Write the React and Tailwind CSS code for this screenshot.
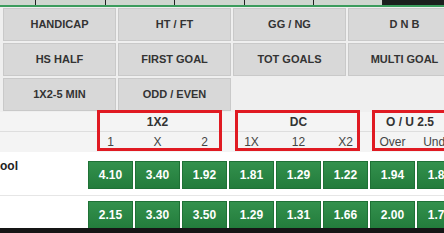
const MARKETS = [
  ["HANDICAP", "HT / FT", "GG / NG", "D N B"],
  ["HS HALF", "FIRST GOAL", "TOT GOALS", "MULTI GOAL"],
  ["1X2-5 MIN", "ODD / EVEN"],
];

const GROUPS = [
  { title: "1X2", cols: ["1", "X", "2"], w: "w-[139px]" },
  { title: "DC", cols: ["1X", "12", "X2"], w: "w-[139px]" },
  { title: "O / U 2.5", cols: ["Over", "Under"], w: "w-[80px]" },
];

const MATCHES = [
  { name: "ool", odds: [["4.10", "3.40", "1.92"], ["1.81", "1.29", "1.22"], ["1.94", "1.86"]] },
  { name: "", odds: [["2.15", "3.30", "3.50"], ["1.29", "1.31", "1.66"], ["2.00", "1.76"]] },
];

const TABS = [36, 70, 69, 70, 69, 69];

const OddButton = ({ value }) => (
  <button className="w-[45px] h-[28px] shrink-0 bg-gradient-to-b from-[#33914d] to-[#237c3c] border border-[#1f7136] text-white text-[12px] font-bold">
    {value}
  </button>
);

export default function App() {
  return (
    <div
      className="w-[444px] h-[233px] overflow-hidden bg-white relative"
      style={{ fontFamily: '"Liberation Sans", Arial, sans-serif' }}
    >
      {/* top tab strip */}
      <div className="flex h-[7px] border-b-2 border-[#3b9c5c]">
        {TABS.map((w, i) => (
          <div key={i} style={{ width: w }} className="shrink-0 bg-[#cfd6cf] border-r border-[#222]" />
        ))}
        <div className="flex-1 bg-[#1b1f1d]" />
      </div>

      {/* market buttons */}
      <div className="bg-[#efefef] pl-[3px] pt-[1px] pb-[1px] flex flex-col gap-[2px]">
        {MARKETS.map((row, r) => (
          <div key={r} className="flex gap-[2px]">
            {row.map((label) => (
              <button
                key={label}
                className="w-[113px] h-[33px] shrink-0 bg-[#d8d8d8] border border-[#c9c9c9] text-[#333] text-[11px] font-bold uppercase"
              >
                {label}
              </button>
            ))}
          </div>
        ))}
      </div>

      {/* header */}
      <div className="relative bg-[#f4f4f4] text-[11px] text-[#444]">
        <div className="flex h-[20px] items-center border-b border-[#dedede] pl-[88px] gap-[2px]">
          {GROUPS.map((g) => (
            <div key={g.title} className={`${g.w} shrink-0 text-center text-[12px] font-bold text-[#333]`}>
              {g.title}
            </div>
          ))}
        </div>
        <div className="flex h-[20px] items-center pl-[88px] gap-[2px] text-[12px]">
          {GROUPS.map((g) => (
            <div key={g.title} className="flex gap-[2px] shrink-0">
              {g.cols.map((c) => (
                <div key={c} className="w-[45px] text-center">
                  {c}
                </div>
              ))}
            </div>
          ))}
        </div>
        {/* highlight boxes */}
        <div className="absolute left-[97px] top-[-2px] w-[125px] h-[41px] border-[3px] border-[#e01a22]" />
        <div className="absolute left-[235px] top-[-2px] w-[125px] h-[41px] border-[3px] border-[#e01a22]" />
        <div className="absolute left-[372px] top-[-2px] w-[100px] h-[41px] border-[3px] border-[#e01a22]" />
      </div>

      {/* match rows */}
      {MATCHES.map((m, i) => (
        <div
          key={i}
          className={
            i === 0
              ? "flex h-[44px] pt-[9px] border-b border-[#e6e6e6]"
              : "flex h-[34px] pt-[5px]"
          }
        >
          <div className="w-[88px] shrink-0 text-[12px] leading-[14px] font-bold text-[#222] -mt-[2px]">{m.name}</div>
          <div className="flex gap-[2px]">
            {m.odds.map((g, j) => (
              <div key={j} className="flex gap-[2px] shrink-0">
                {g.map((o, k) => (
                  <OddButton key={k} value={o} />
                ))}
              </div>
            ))}
          </div>
        </div>
      ))}

      <div className="absolute left-0 right-0 bottom-0 h-[5px] bg-[#151515]" />
    </div>
  );
}
